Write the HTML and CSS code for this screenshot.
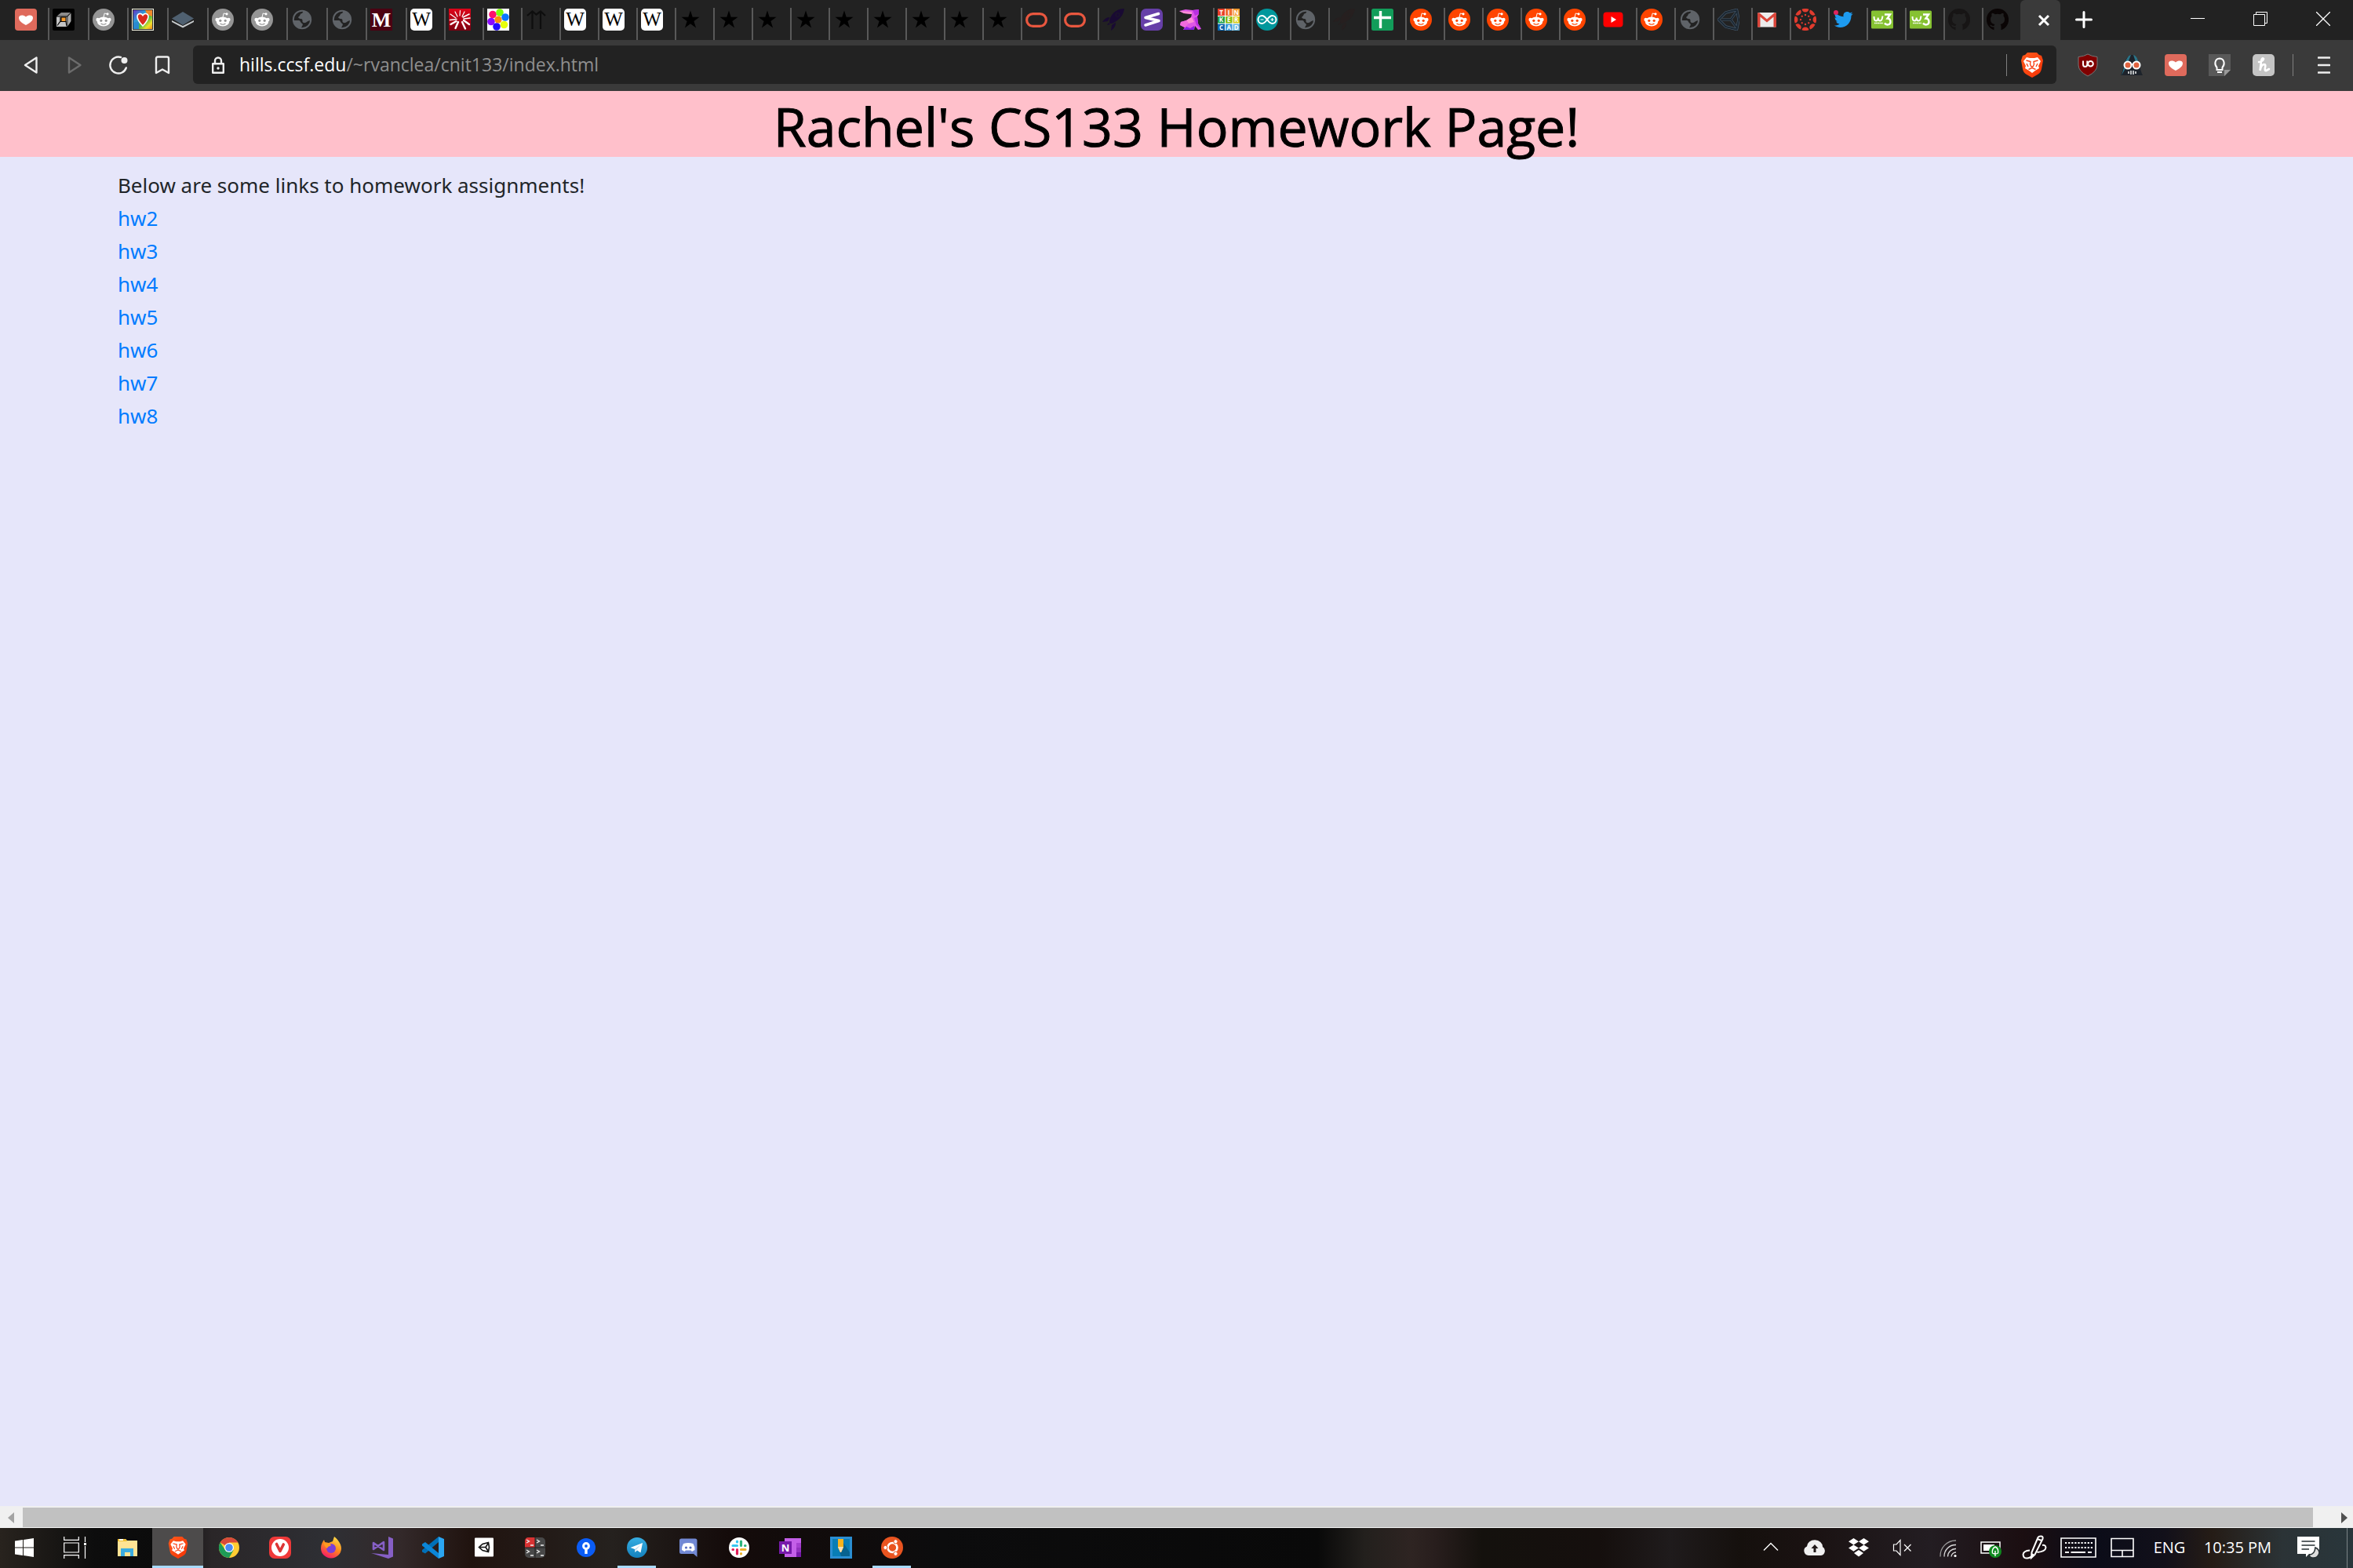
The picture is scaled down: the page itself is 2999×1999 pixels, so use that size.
FILE: index.html
```html
<!DOCTYPE html>
<html lang="en">
<head>
<meta charset="utf-8">
<title>Rachel's CS133 Homework Page!</title>
<link rel="stylesheet" href="styles.css">
</head>
<body>
<svg class="sprite" aria-hidden="true">
  <defs>
    <linearGradient id="g-red" x1="0" y1="0" x2="0" y2="1"><stop offset="0" stop-color="#e0051a"/><stop offset="1" stop-color="#7c0010"/></linearGradient>
    <linearGradient id="g-rainbow" x1="0" y1="0" x2="1" y2="1"><stop offset="0" stop-color="#6a2fc0"/><stop offset=".35" stop-color="#2f9ad8"/><stop offset=".6" stop-color="#4dbb3c"/><stop offset=".8" stop-color="#f0e02a"/><stop offset="1" stop-color="#f07f1c"/></linearGradient>
    <linearGradient id="g-fox" x1=".8" y1="0" x2=".3" y2="1"><stop offset="0" stop-color="#ffe14a"/><stop offset=".5" stop-color="#ff8a1c"/><stop offset="1" stop-color="#f5156c"/></linearGradient>
    <linearGradient id="g-tele" x1="0" y1="0" x2="0" y2="1"><stop offset="0" stop-color="#37aee2"/><stop offset="1" stop-color="#1481bd"/></linearGradient>
    <linearGradient id="g-brave" x1="0" y1="0" x2="1" y2="1"><stop offset="0" stop-color="#ff5a1c"/><stop offset="1" stop-color="#f53205"/></linearGradient>
  </defs>
  <symbol id="heart" viewBox="0 0 28 28"><rect width="28" height="28" rx="4" fill="#df6a5c"/><path d="M14 21C9 18.500 5 15.500 5 11.800C5 8 10.500 7.500 14 10.500C17.500 7.500 23 8 23 11.800C23 15.500 19 18.500 14 21Z" fill="#fff"/></symbol>
  <symbol id="cube" viewBox="0 0 28 28"><rect width="28" height="28" rx="2" fill="#000"/><path d="M5.500 9.500L11 5H23L18.500 9.500Z" fill="#8c8c8c"/><path d="M19.300 10L23.500 5.800V16L19.300 22.500Z" fill="#aaa"/><path d="M5 10.500H18.500V23H5Z" fill="#c4c4c4"/><path d="M10 11V16L6 21.500M10 16.500H17L18 22.500" fill="none" stroke="#000" stroke-width="1.200"/><rect x="11" y="11" width="6" height="5.500" fill="#f79a2b" stroke="#000"/></symbol>
  <symbol id="reddit" viewBox="0 0 28 28"><circle cx="14" cy="14" r="14" fill="currentColor"/><g fill="#fff"><ellipse cx="14" cy="16.500" rx="8.200" ry="6"/><circle cx="6.600" cy="14" r="2.200"/><circle cx="21.400" cy="14" r="2.200"/><circle cx="19" cy="6.800" r="1.600"/></g><path d="M14 11L15.200 6L19 6.800" fill="none" stroke="#fff" stroke-width="1"/><circle cx="10.800" cy="15.300" r="1.600" fill="currentColor"/><circle cx="17.200" cy="15.300" r="1.600" fill="currentColor"/><path d="M10.500 19Q14 21.400 17.500 19" fill="none" stroke="currentColor" stroke-width="1.100"/></symbol>
  <symbol id="rainbow" viewBox="0 0 28 28"><rect width="28" height="28" fill="#f1f1df"/><rect x="1.500" y="1.500" width="25" height="25" fill="url(#g-rainbow)" stroke="#333"/><path d="M17 2H26V10L20 8Z" fill="#f08a2a"/><path d="M2 18L9 16L9 26H2Z" fill="#2a8ad0"/><path d="M14 22C9 17 7 14 7 10C7 6 12 5 14 8.500C16 5 21 6 21 10C21 14 19 17 14 22Z" fill="#d92a1e" stroke="#fff" stroke-width="1.600"/></symbol>
  <symbol id="layers" viewBox="0 0 28 28"><path d="M0 15L14 22L28 15V17L14 24.500L0 17Z" fill="#c8ccce"/><path d="M14 4L28 12.500L14 21L0 12.500Z" fill="#4f6070"/></symbol>
  <symbol id="globe" viewBox="0 0 28 28"><circle cx="14" cy="14" r="11.200" fill="none" stroke="#5f6368" stroke-width="2"/><path d="M16 3L14 6C11 6 12 9 10 10C8 11 10 13 13 13C16 14 13 17 16 18C19 19 21 15 25 15C25.500 9 22 4 16 3Z" fill="#5f6368"/><path d="M3 15H10C12 15 12 18 14 19C16 20 14 22 13 24.500C7 25 3 20 3 15Z" fill="#5f6368"/></symbol>
  <symbol id="burst" viewBox="0 0 28 28"><rect width="28" height="28" fill="url(#g-red)"/><g stroke="#fff" stroke-linecap="round"><path d="M11 10L8 4M14 9L14.500 2.500M17 10L20 4M9 12L2 7" stroke-width="1.200"/><path d="M18 11L26 7M19 13L27 12M10 13.500L1.500 14.500" stroke-width="1.600"/><path d="M9.500 16L2.500 20M12 17L8.500 25M17 17L21 25.500M19 15L26 20" stroke-width="2.400"/></g></symbol>
  <symbol id="flower" viewBox="0 0 28 28"><rect width="28" height="28" fill="#fff"/><circle cx="7" cy="7.500" r="4.800" fill="#ff0f6b"/><circle cx="16" cy="5" r="4.800" fill="#7aff0a"/><circle cx="23" cy="11" r="4.800" fill="#0a78ff"/><circle cx="5" cy="16.500" r="4.800" fill="#8a0aff"/><circle cx="14" cy="14" r="4.600" fill="#ff8a0a"/><circle cx="21.500" cy="20.500" r="4.800" fill="#e8ff0a"/><circle cx="12" cy="23" r="4.800" fill="#230aff"/></symbol>
  <symbol id="arrows" viewBox="0 0 28 28"><path d="M8.500 26V4M19 26V4M2 9L8.500 3.500L13.500 7.500L19 3.500L25 9" fill="none" stroke="#0e0e0e" stroke-width="2.200"/></symbol>
  <symbol id="star" viewBox="0 0 28 28"><path d="M14 2.500L16.700 10.800H25.500L18.400 16L21.100 24.400L14 19.200L6.900 24.400L9.600 16L2.500 10.800H11.300Z" fill="#000"/></symbol>
  <symbol id="oval" viewBox="0 0 28 28"><rect x="1.600" y="6.600" width="24.800" height="15.800" rx="7.900" fill="none" stroke="#e9573f" stroke-width="3.200"/></symbol>
  <symbol id="rocket" viewBox="0 0 28 28"><path d="M28 0C21 0 15 3 11 10C9 13 9 16 9 18C10 19 11 19 12 19C18 17 27 10 28 0ZM9.500 11C5 11 2 14 0 17L7 16ZM17 17.500C17 23 14 26 11 28L12 21ZM8 18L6 21L10 20Z" fill="currentColor"/><circle cx="19.500" cy="8" r="2.500" fill="none" stroke="#222" stroke-width=".6"/></symbol>
  <symbol id="semaphore" viewBox="0 0 28 28"><rect width="28" height="28" rx="6.500" fill="#663fa8"/><path d="M22.500 6.500L6 11.500L23 15.500L6 21" fill="none" stroke="#fff" stroke-width="3.600" stroke-linecap="round" stroke-linejoin="round"/></symbol>
  <symbol id="rabbit" viewBox="0 0 28 28"><path d="M0 3L8 1L17 2L25 1V7L23 10L24 19L28 26L24 27L20 22L19 27H5L7 24L1 21L2 17L9 15L15 11L16 7L6 6Z" fill="#e056e6"/><path d="M0 3L16 4L16 7L6 6ZM9 15L16 11L19 17L12 19Z" fill="#ff8fd6"/><path d="M17 2L25 1V7L20 9ZM19 12L23 10L24 19L28 26L22 21Z" fill="#b92fe0"/><path d="M5 27L9 23L14 25L19 22L19 27Z" fill="#8a1fe0"/><path d="M2 17L9 15L12 19L7 24L1 21Z" fill="#f26bdc"/></symbol>
  <symbol id="arduino" viewBox="0 0 28 28"><circle cx="14" cy="14" r="14" fill="#00979c"/><path d="M14 14C11.500 10.500 10 9 7.500 9A5 5 0 0 0 7.500 19C10 19 11.500 17.500 14 14C16.500 10.500 18 9 20.500 9A5 5 0 0 1 20.500 19C18 19 16.500 17.500 14 14Z" fill="none" stroke="#fff" stroke-width="2"/><path d="M5.500 14H9.500M18.500 14H22.500M20.500 12V16" stroke="#fff" stroke-width="1.200"/></symbol>
  <symbol id="sheets" viewBox="0 0 28 28"><rect width="28" height="28" rx="2.500" fill="#129d5a"/><path d="M11.500 3V25M3 11.500H25" stroke="#fff" stroke-width="3.400"/></symbol>
  <symbol id="youtube" viewBox="0 0 28 28"><rect x="1.500" y="4.500" width="25" height="19" rx="4" fill="#f00"/><path d="M11.500 10L18 14L11.500 18Z" fill="#fff"/></symbol>
  <symbol id="unity" viewBox="0 0 28 28"><path d="M1 14L10 5.500L25 1.500L27 14L25 26.500L10 22.500Z" fill="none" stroke="currentColor" stroke-width="2.600"/><path d="M5 14H18M18 14L25 3M18 14L25 25" fill="none" stroke="currentColor" stroke-width="2.600"/></symbol>
  <symbol id="gmail" viewBox="0 0 28 28"><rect x="2" y="5" width="24" height="18.500" rx="1.500" fill="#ececec"/><path d="M2 6.500Q2 5 4 5L14 13.500L24 5Q26 5 26 6.500V23.500H22.500V10.500L14 17.500L5.500 10.500V23.500H2Z" fill="#d9453a"/></symbol>
  <symbol id="canvas" viewBox="0 0 28 28"><g fill="#e13b2e"><g id="cv"><path d="M9.500 0.800Q14 -1 18.500 0.800A4.600 4.600 0 0 1 9.500 .8Z"/><circle cx="14" cy="8" r="1.200"/></g><use href="#cv" transform="rotate(45 14 14)"/><use href="#cv" transform="rotate(90 14 14)"/><use href="#cv" transform="rotate(135 14 14)"/><use href="#cv" transform="rotate(180 14 14)"/><use href="#cv" transform="rotate(225 14 14)"/><use href="#cv" transform="rotate(270 14 14)"/><use href="#cv" transform="rotate(315 14 14)"/></g></symbol>
  <symbol id="twitter" viewBox="0 0 28 28"><path d="M2 21.500C5 21.500 7 21 8.500 19.500C6 19.300 4.800 18 4.200 16.300H6.200C3.800 15.500 2.600 13.800 2.600 11.300L4.700 12C2.600 10 2 7.500 3.400 5.200C6 8.200 9.300 10 13.600 10.200C12.800 6 15.500 4 18.400 4C20 4 21 4.600 22 5.500L25 4.400L23 7.200L25.800 6.500L23.500 9C23.500 18 17 24 9.500 24C6.500 24 4 23 2 21.500Z" fill="#1d9bf0"/><circle cx="4" cy="5" r="3" fill="#e0245e"/></symbol>
  <symbol id="w3" viewBox="0 0 28 28"><rect y="2.500" width="28" height="23" rx="1.500" fill="#86c232"/><path d="M3.500 10C3.500 14.500 4.500 15.500 6 15.500C8 15.500 8.700 14 8.700 11.500C8.700 14 9.500 15.500 11.500 15.500C13.800 15.500 14 12.500 14.500 9.500" fill="none" stroke="#fff" stroke-width="2"/><path d="M17 7.500H24L20.500 12.500C24 12.500 24.500 15 24.500 17C24.500 21 19 21.500 17 18.500" fill="none" stroke="#fff" stroke-width="2.400"/><path d="M4 18.500H15" stroke="#fff" stroke-width="1.600" stroke-dasharray="1.200 .4"/></symbol>
  <symbol id="github" viewBox="0 0 28 28"><path d="M14 0A14 14 0 0 0 9.500 27.300V23.500C6 24 5 22.500 4 20.500C7 21 7 22.500 9.500 22C9.600 21 10 20.400 10.500 20C6.500 19.300 5 17 5 13.500C5 11.800 5.500 10.500 6.500 9.500C6.200 8 6.200 7 6.800 5.700C8.500 5.700 9.500 6.500 10.700 7.200Q14 6.500 17.300 7.200C18.500 6.500 19.500 5.700 21.200 5.700C21.800 7 21.800 8 21.500 9.500C22.500 10.500 23 11.800 23 13.500C23 17 21.500 19.300 17.500 20C18.300 20.800 18.500 21.500 18.500 23V27.300A14 14 0 0 0 14 0Z" fill="currentColor"/></symbol>
  <symbol id="brave" viewBox="0 0 28 32"><path d="M8 0H20L23 3L26 4L28 10L26 21Q25 26 21 28L14 32L7 28Q3 26 2 21L0 10L2 4L5 3Z" fill="url(#g-brave)"/><path d="M7 6L11 7H17L21 6L25 11L22 17L23 20L18 23L14 26L10 23L5 20L6 17L3 11Z" fill="#fff"/><path d="M6.500 10L12 11.500L11.500 15L13 18H15L16.500 15L16 11.500L21.500 10M14 18V20M9.500 21.500L14 19.500L18.500 21.500M7 14L9 18M21 14L19 18" fill="none" stroke="#f9431a" stroke-width="1.400"/></symbol>
  <symbol id="ublock" viewBox="0 0 26 30"><path d="M13 1Q18 4 25 4.500V15Q25 23 13 29Q1 23 1 15V4.500Q8 4 13 1Z" fill="#800000" stroke="#777"/><path d="M7 9.500V14Q7 17 9.500 17Q12.300 17 12.300 14V9.500" fill="none" stroke="#fff" stroke-width="2"/><circle cx="16.500" cy="13.300" r="3.300" fill="none" stroke="#fff" stroke-width="2"/></symbol>
  <symbol id="vader" viewBox="0 0 28 28"><path d="M0 27C4 20 3 12 7 6Q14 -4 21 6C25 12 24 20 28 27Z" fill="#1d232b"/><path d="M7 7Q10 1 13 1L9 11L5 20L1 27C4 20 4 12 7 7ZM16 1Q20 2 22 8L24 14L19 10Z" fill="#2b7488"/><circle cx="9" cy="14" r="4.500" fill="#e0633f" stroke="#fff" stroke-width="2"/><circle cx="20" cy="14" r="4.500" fill="#e0633f" stroke="#fff" stroke-width="2"/><path d="M13 13H16M10 22V25M13 21V26M16 21V26M19 22V25" stroke="#fff" stroke-width="1.400"/></symbol>
  <symbol id="bulb" viewBox="0 0 28 28"><path d="M0 0H28V20L20 28H0Z" fill="#595959"/><path d="M28 20H20V28Z" fill="#999"/><path d="M10.500 17C7 13.500 7.500 6 14 5.500C20.500 6 21 13.500 17.500 17V20H10.500ZM11 23H17" fill="none" stroke="#fff" stroke-width="2"/></symbol>
  <symbol id="honey" viewBox="0 0 28 28"><rect width="28" height="28" rx="5" fill="#c4c4c4"/><path d="M8 10Q14 9 14 6Q12 4 11 9L9.500 21Q11 13 15 13Q17 13 16 17Q15 22 17.500 21L21 19" fill="none" stroke="#fff" stroke-width="2.600" stroke-linecap="round"/></symbol>
  <symbol id="cloud" viewBox="0 0 28 28"><path d="M6 24A6 6 0 0 1 4 12.500A10 8.500 0 0 1 24 13A6 6 0 0 1 22 24Z" fill="#f0f0f0"/><path d="M14 10L9.500 15H12.500V20H15.500V15H18.500Z" fill="#211a1a"/></symbol>
</svg>

<div class="window">
  <header class="chrome">
    <nav class="tabs" aria-label="Tabs">
      <div class="tab tab-first"><svg><use href="#heart"/></svg></div>
      <div class="tab-group">
        <div class="tab"><svg><use href="#cube"/></svg></div>
        <div class="tab grey"><svg><use href="#reddit"/></svg></div>
        <div class="tab"><svg><use href="#rainbow"/></svg></div>
        <div class="tab"><svg><use href="#layers"/></svg></div>
        <div class="tab grey"><svg><use href="#reddit"/></svg></div>
        <div class="tab grey"><svg><use href="#reddit"/></svg></div>
        <div class="tab"><svg><use href="#globe"/></svg></div>
        <div class="tab"><svg><use href="#globe"/></svg></div>
        <div class="tab"><svg viewBox="0 0 28 28"><rect width="28" height="28" fill="#4c0012"/><text x="14" y="23" text-anchor="middle" class="glyph glyph-m">M</text></svg></div>
      </div>
      <div class="tab"><svg viewBox="0 0 28 28"><rect width="28" height="28" rx="5" fill="#fff"/><text x="14" y="22" text-anchor="middle" class="glyph glyph-w">W</text></svg></div>
      <div class="tab"><svg><use href="#burst"/></svg></div>
      <div class="tab"><svg><use href="#flower"/></svg></div>
      <div class="tab"><svg><use href="#arrows"/></svg></div>
      <div class="tab"><svg viewBox="0 0 28 28"><rect width="28" height="28" rx="5" fill="#fff"/><text x="14" y="22" text-anchor="middle" class="glyph glyph-w">W</text></svg></div>
      <div class="tab"><svg viewBox="0 0 28 28"><rect width="28" height="28" rx="5" fill="#fff"/><text x="14" y="22" text-anchor="middle" class="glyph glyph-w">W</text></svg></div>
      <div class="tab"><svg viewBox="0 0 28 28"><rect width="28" height="28" rx="5" fill="#fff"/><text x="14" y="22" text-anchor="middle" class="glyph glyph-w">W</text></svg></div>
      <div class="tab"><svg><use href="#star"/></svg></div>
      <div class="tab"><svg><use href="#star"/></svg></div>
      <div class="tab"><svg><use href="#star"/></svg></div>
      <div class="tab"><svg><use href="#star"/></svg></div>
      <div class="tab"><svg><use href="#star"/></svg></div>
      <div class="tab"><svg><use href="#star"/></svg></div>
      <div class="tab"><svg><use href="#star"/></svg></div>
      <div class="tab"><svg><use href="#star"/></svg></div>
      <div class="tab"><svg><use href="#star"/></svg></div>
      <div class="tab"><svg><use href="#oval"/></svg></div>
      <div class="tab"><svg><use href="#oval"/></svg></div>
      <div class="tab indigo"><svg><use href="#rocket"/></svg></div>
      <div class="tab"><svg><use href="#semaphore"/></svg></div>
      <div class="tab"><svg><use href="#rabbit"/></svg></div>
      <div class="tab"><svg viewBox="0 0 28 28"><rect width="28" height="28" fill="#fff"/><path d="M0 0H9V9H0Z" fill="#e8402a"/><path d="M10 0H18.500V9H10Z" fill="#f07030"/><path d="M19.500 0H28V9H19.500Z" fill="#f59a30"/><path d="M0 10H9V18.500H0Z" fill="#1aa04a"/><path d="M10 10H18.500V18.500H10Z" fill="#86bc10"/><path d="M19.500 10H28V18.500H19.500Z" fill="#d8cc1a"/><path d="M0 19.500H9V28H0Z" fill="#0a66b0"/><path d="M10 19.500H18.500V28H10Z" fill="#3a9ad8"/><path d="M19.500 19.500H28V28H19.500Z" fill="#68b8e0"/><g class="glyph glyph-tiny" text-anchor="middle"><text x="4.500" y="7.500">T</text><text x="14.200" y="7.500">I</text><text x="23.700" y="7.500">N</text><text x="4.500" y="17">K</text><text x="14.200" y="17">E</text><text x="23.700" y="17">R</text><text x="4.500" y="26.500">C</text><text x="14.200" y="26.500">A</text><text x="23.700" y="26.500">D</text></g></svg></div>
      <div class="tab"><svg><use href="#arduino"/></svg></div>
      <div class="tab"><svg><use href="#globe"/></svg></div>
      <div class="tab shadow"><svg><use href="#rocket"/></svg></div>
      <div class="tab"><svg><use href="#sheets"/></svg></div>
      <div class="tab orange"><svg><use href="#reddit"/></svg></div>
      <div class="tab orange"><svg><use href="#reddit"/></svg></div>
      <div class="tab orange"><svg><use href="#reddit"/></svg></div>
      <div class="tab orange"><svg><use href="#reddit"/></svg></div>
      <div class="tab orange"><svg><use href="#reddit"/></svg></div>
      <div class="tab"><svg><use href="#youtube"/></svg></div>
      <div class="tab orange"><svg><use href="#reddit"/></svg></div>
      <div class="tab"><svg><use href="#globe"/></svg></div>
      <div class="tab"><svg viewBox="0 0 28 28"><path d="M1.500 14L10.500 5L24.500 1.500L27 14L24.500 26.500L10.500 23Z" fill="none" stroke="#46586a" stroke-width="3.400"/><path d="M6 14H17L25 3M17 14L25 25" fill="none" stroke="#46586a" stroke-width="3"/><path d="M1.500 14L10.500 5L24.500 1.500L27 14L24.500 26.500L10.500 23ZM6 14H17L25 3M17 14L25 25" fill="none" stroke="#1c2833" stroke-width="2"/></svg></div>
      <div class="tab"><svg><use href="#gmail"/></svg></div>
      <div class="tab"><svg><use href="#canvas"/></svg></div>
      <div class="tab"><svg><use href="#twitter"/></svg></div>
      <div class="tab"><svg><use href="#w3"/></svg></div>
      <div class="tab"><svg><use href="#w3"/></svg></div>
      <div class="tab dim"><svg><use href="#github"/></svg></div>
      <div class="tab black"><svg><use href="#github"/></svg></div>
      <div class="tab-active"><button class="icon-button" aria-label="Close tab"><svg width="16" height="16" viewBox="0 0 16 16"><path d="M2 2L14 14M14 2L2 14" stroke="#fff" stroke-width="3"/></svg></button></div>
      <button class="icon-button new-tab" aria-label="New tab"><svg width="22" height="22" viewBox="0 0 22 22"><path d="M11 1.500V20.500M1.500 11H20.500" stroke="#fff" stroke-width="3" stroke-linecap="round"/></svg></button>
      <div class="window-controls">
        <button class="icon-button" aria-label="Minimize"><svg width="18" height="18" viewBox="0 0 18 18"><path d="M0 8.500H18" stroke="#fff"/></svg></button>
        <button class="icon-button" aria-label="Restore"><svg width="18" height="18" viewBox="0 0 18 18"><path d="M.5 3.500H14.500V17.500H.5ZM3.500 3.500V.5H17.500V14.500H14.500" fill="none" stroke="#fff"/></svg></button>
        <button class="icon-button" aria-label="Close"><svg width="18" height="18" viewBox="0 0 18 18"><path d="M0 0L18 18M18 0L0 18" stroke="#fff" stroke-width="1.300"/></svg></button>
      </div>
    </nav>
    <div class="toolbar">
      <div class="nav-buttons">
        <button class="icon-button" aria-label="Back"><svg width="20" height="24" viewBox="0 0 20 24"><path d="M17.500 2.500V21.500L3 12Z" fill="none" stroke="currentColor" stroke-width="2.400" stroke-linejoin="round"/></svg></button>
        <button class="icon-button forward" aria-label="Forward" disabled><svg width="20" height="24" viewBox="0 0 20 24"><path d="M3 2.500V21.500L17.500 12Z" fill="none" stroke="currentColor" stroke-width="2.400" stroke-linejoin="round"/></svg></button>
        <button class="icon-button" aria-label="Reload"><svg width="26" height="26" viewBox="0 0 26 26"><path d="M16 3A10.500 10.500 0 1 0 22.800 16.500" fill="none" stroke="currentColor" stroke-width="2.400" stroke-linecap="round"/><circle cx="20.500" cy="7" r="4" fill="currentColor"/></svg></button>
        <button class="icon-button" aria-label="Bookmark"><svg width="20" height="24" viewBox="0 0 20 24"><path d="M2 3.500Q2 1.500 4 1.500H16Q18 1.500 18 3.500V22L10 17.500L2 22Z" fill="none" stroke="currentColor" stroke-width="2.400" stroke-linejoin="round"/></svg></button>
      </div>
      <div class="address">
        <svg width="18" height="22" viewBox="0 0 18 22"><path d="M2.200 9.200H15.800V20.800H2.200ZM5 9V5.500A4 4 0 0 1 13 5.500V9" fill="none" stroke="#eee" stroke-width="2.400" stroke-linejoin="round"/><circle cx="9" cy="15" r="1.700" fill="#eee"/></svg>
        <div class="url"><span class="host">hills.ccsf.edu</span>/~rvanclea/cnit133/index.html</div>
        <span class="divider"></span>
        <button class="icon-button shield" aria-label="Brave Shields"><svg width="28" height="32"><use href="#brave"/></svg></button>
      </div>
      <div class="extensions">
        <button class="icon-button" aria-label="uBlock Origin"><svg width="26" height="30"><use href="#ublock"/></svg></button>
        <button class="icon-button" aria-label="Privacy mask"><svg width="28" height="28"><use href="#vader"/></svg></button>
        <button class="icon-button" aria-label="Favorites"><svg width="28" height="28"><use href="#heart"/></svg></button>
        <button class="icon-button" aria-label="Keep"><svg width="28" height="28"><use href="#bulb"/></svg></button>
        <button class="icon-button" aria-label="Honey"><svg width="28" height="28"><use href="#honey"/></svg></button>
      </div>
      <span class="divider"></span>
      <button class="icon-button menu" aria-label="Menu"><svg width="16" height="22" viewBox="0 0 16 22"><path d="M1 1.500H15M1 11H15M1 20.500H15" stroke="#eee" stroke-width="2.600" stroke-linecap="round"/></svg></button>
    </div>
  </header>

  <main class="page">
    <h1>Rachel's CS133 Homework Page!</h1>
    <div class="content">
      <p>Below are some links to homework assignments!</p>
      <ul>
        <li><a href="#hw2">hw2</a></li>
        <li><a href="#hw3">hw3</a></li>
        <li><a href="#hw4">hw4</a></li>
        <li><a href="#hw5">hw5</a></li>
        <li><a href="#hw6">hw6</a></li>
        <li><a href="#hw7">hw7</a></li>
        <li><a href="#hw8">hw8</a></li>
      </ul>
    </div>
  </main>

  <div class="scrollbar">
    <svg width="8" height="14" viewBox="0 0 8 14"><path d="M8 0V14L0 7Z" fill="#a3a3a3"/></svg>
    <div class="thumb"></div>
    <svg width="8" height="14" viewBox="0 0 8 14"><path d="M0 0V14L8 7Z" fill="#505050"/></svg>
  </div>

  <footer class="taskbar">
    <button class="task start" aria-label="Start"><svg viewBox="0 0 28 28"><path d="M2 5.500L12 4V13.500H2ZM13 3.900L26 2V13.500H13ZM2 14.500H12V24L2 22.500ZM13 14.500H26V26L13 24.100Z" fill="#fff"/></svg></button>
    <button class="task view" aria-label="Task View"><svg width="30" height="28" viewBox="0 0 30 28"><path d="M.7 0V4.300H19.300V0M.7 28V23.700H19.300V28M.7 8H19.300V20H.7ZM27.500 0V7M27.500 12V28" fill="none" stroke="#fff" stroke-width="1.200"/><rect x="26" y="8" width="3" height="3" fill="#fff"/></svg></button>
    <button class="task" aria-label="File Explorer"><svg viewBox="0 0 28 28"><path d="M2 3H12L14 5H27V25H2Z" fill="#ffe394"/><path d="M2 3H12L14 6H2Z" fill="#f0c030"/><path d="M4 4H9" stroke="#fff" stroke-width="2"/><path d="M6 15H22V25H18V20H11V25H6Z" fill="#3bace0"/></svg></button>
    <button class="task current" aria-label="Brave"><svg><use href="#brave"/></svg></button>
    <button class="task" aria-label="Chrome"><svg viewBox="0 0 28 28"><circle cx="14" cy="14" r="13" fill="#fc3"/><path d="M14 14L2.700 7.500A13 13 0 0 1 25.300 7.500H14Z" fill="#d9493a"/><path d="M14 14L19.500 17.500L14 27A13 13 0 0 1 2.700 7.500L9 17Z" fill="#1e9c57"/><circle cx="14" cy="14" r="6" fill="#fff"/><circle cx="14" cy="14" r="4.800" fill="#4a8af4"/></svg></button>
    <button class="task" aria-label="Vivaldi"><svg viewBox="0 0 28 28"><rect width="28" height="28" rx="7" fill="#ef3939"/><circle cx="14" cy="14" r="11" fill="#fff"/><path d="M9.500 9.500L14 18.500L18.300 10" fill="none" stroke="#dc3535" stroke-width="3.600" stroke-linecap="round" stroke-linejoin="round"/></svg></button>
    <button class="task" aria-label="Firefox"><svg viewBox="0 0 28 28"><path d="M18 0C22 3 27 9 27 15A13 12.500 0 0 1 1 15C1 10 3 7 5 4L6 7L11 8L16 6Z" fill="url(#g-fox)"/><circle cx="14" cy="15" r="6" fill="#7b3fd8"/><path d="M5 8L12 9Q15 10 13 12Q10 12 9 15Q5 13 5 8Z" fill="#ff9b1f"/></svg></button>
    <button class="task" aria-label="Visual Studio"><svg viewBox="0 0 28 28"><path d="M22 0L28 2.500V25.500L22 28L0 21L22 23Z" fill="#865fc5"/><path d="M3 8L16 17V7L3 16Z" fill="none" stroke="#865fc5" stroke-width="2.600" stroke-linejoin="round"/></svg></button>
    <button class="task" aria-label="Visual Studio Code"><svg viewBox="0 0 28 28"><path d="M21 7L4 21.500L0 19.500V17L21 0Z" fill="#0070b8"/><path d="M0 9.500L4 7L21 21V28L0 11.500Z" fill="#0b86d8"/><path d="M21 0L28 3V25L21 28Z" fill="#2ba6f2"/></svg></button>
    <button class="task" aria-label="Unity"><svg viewBox="0 0 28 28"><rect x="2" y="1.500" width="24" height="24" rx="1" fill="#fff"/><path d="M7.500 13.500L12 9.500L19.500 7.500L20.500 13.500L19.500 19.500L12 17.500ZM9 13.500H16L19.500 8M16 13.500L19.500 19" fill="none" stroke="#111" stroke-width="1.600"/></svg></button>
    <button class="task" aria-label="Terminals"><svg viewBox="0 0 28 28"><rect x="1" y="1" width="26" height="26" rx="5" fill="#484848"/><path d="M1 14V6Q1 1 6 1H14V14Z" fill="#d93232"/><path d="M14 1V27M1 14H27" stroke="#222"/><path d="M3 4L6.500 6L3 8M16 4L19.500 6L16 8M3 17L6.500 19L3 21M16 17L19.500 19L16 21M8 11H12M21 11H25M8 24H12M21 24H25" fill="none" stroke="#eee" stroke-width="1.300"/></svg></button>
    <button class="task" aria-label="Sourcetree"><svg viewBox="0 0 28 28"><circle cx="14" cy="14" r="12" fill="#0a5cf5"/><circle cx="14" cy="12" r="3.400" fill="none" stroke="#fff" stroke-width="3"/><path d="M14 15V22" stroke="#fff" stroke-width="3.400"/></svg></button>
    <button class="task running" aria-label="Telegram"><svg viewBox="0 0 28 28"><circle cx="14" cy="14" r="13" fill="url(#g-tele)"/><path d="M5.500 14L21 8L18.500 20.500L14 17.500L11.500 20L11 16Z" fill="#fff"/><path d="M11 16L18.500 10.500L12.500 17L11.500 20Z" fill="#b8d8ea"/></svg></button>
    <button class="task" aria-label="Discord"><svg viewBox="0 0 28 28"><path d="M3 5Q3 2.500 5.500 2.500H23Q25.500 2.500 25.500 5V26L21 22H5.500Q3 22 3 19.500Z" fill="#7289d4"/><path d="M8 9Q14 7 20.500 9Q23 13 22.500 17L19 19L17.500 17.500H11L9.500 19L6 17Q5.500 13 8 9Z" fill="#fff"/><circle cx="11.500" cy="14" r="1.600" fill="#5a6fc0"/><circle cx="17" cy="14" r="1.600" fill="#5a6fc0"/></svg></button>
    <button class="task" aria-label="Slack"><svg viewBox="0 0 28 28"><circle cx="14" cy="14" r="13" fill="#fff"/><g fill="none" stroke-width="3.200" stroke-linecap="round"><path d="M6 11.500H11.500M11.500 6V7" stroke="#36c5f0"/><path d="M16.500 6V11.500M21.500 11.500H22" stroke="#2eb67d"/><path d="M16.500 16.500H22M16.500 21.500V22" stroke="#ecb22e"/><path d="M11.500 16.500V22M6 16.500H6.500" stroke="#e01e5a"/></g></svg></button>
    <button class="task" aria-label="OneNote"><svg viewBox="0 0 28 28"><path d="M7 2H28V26H7Z" fill="#c45fe8"/><path d="M22 8H28V14H22Z" fill="#a63fd0"/><path d="M22 14H28V20H22Z" fill="#9332bf"/><path d="M22 20H28V26H22Z" fill="#7719aa"/><rect y="6" width="16" height="16" fill="#7719aa"/><text x="8" y="19" text-anchor="middle" class="glyph glyph-n">N</text></svg></button>
    <button class="task" aria-label="Pencil"><svg viewBox="0 0 28 28"><rect width="28" height="28" fill="#2a8ed2"/><path d="M3 3H25V25H3Z" fill="#087db5"/><path d="M11 15L14 19L17 8L25 20V25H14Z" fill="#07628f"/><path d="M10 3H17V14L14 20H13L10 14Z" fill="#f9b31c"/><path d="M10 13L17 13L14 20H13Z" fill="#f4dfb8"/></svg></button>
    <button class="task running" aria-label="Ubuntu"><svg viewBox="0 0 28 28"><circle cx="14" cy="14" r="14" fill="#e95420"/><circle cx="14.500" cy="14" r="6" fill="none" stroke="#fff" stroke-width="2.600"/><g fill="#fff" stroke="#e95420"><circle cx="5.500" cy="14" r="2.600"/><circle cx="18.500" cy="6.300" r="2.600"/><circle cx="18.500" cy="21.700" r="2.600"/></g></svg></button>

    <div class="tray">
      <button class="tray-item" aria-label="Show hidden icons"><svg viewBox="0 0 28 28"><path d="M5 17.500L14 8.500L23 17.500" fill="none" stroke="#fff" stroke-width="1.400"/></svg></button>
      <button class="tray-item" aria-label="Backup"><svg><use href="#cloud"/></svg></button>
      <button class="tray-item" aria-label="Dropbox"><svg viewBox="0 0 28 28"><path d="M7.500 2L14 6.200L7.500 10.400L1 6.200ZM20.500 2L27 6.200L20.500 10.400L14 6.200ZM7.500 10.400L14 14.600L7.500 18.800L1 14.600ZM20.500 10.400L27 14.600L20.500 18.800L14 14.600ZM14 17L20 21L14 25.500L8 21Z" fill="#fff"/></svg></button>
      <button class="tray-item" aria-label="Volume muted"><svg viewBox="0 0 28 28"><path d="M2.500 10H6L11 4.500V23.500L6 18H2.500ZM16 10L24.500 18.500M24.500 10L16 18.500" fill="none" stroke="#fff" stroke-width="1.200"/></svg></button>
      <button class="tray-item" aria-label="Wi-Fi"><svg viewBox="0 0 28 28"><path d="M6 25.500A19.500 19.500 0 0 1 26 5" fill="none" stroke="#999" stroke-width="1.300"/><path d="M11 25.500A14.500 14.500 0 0 1 26 10.500M15.500 25.500A10 10 0 0 1 26 15.500M20 25.500A6 6 0 0 1 26 20" fill="none" stroke="#ddd" stroke-width="1.300"/><circle cx="25" cy="24.500" r="1.600" fill="#fff"/></svg></button>
      <button class="tray-item" aria-label="Battery saver"><svg viewBox="0 0 28 28"><path d="M2 7H26V21H2Z" fill="none" stroke="#fff" stroke-width="1.500"/><path d="M5 10H19V18H5Z" fill="#fff"/><circle cx="20" cy="19" r="8" fill="#0f8a1f"/><path d="M20 25V18M16.500 21Q15.500 15 20 13Q24.500 15 23.500 21Q20 23 16.500 21Z" fill="none" stroke="#fff" stroke-width="1.400"/></svg></button>
      <button class="tray-item" aria-label="Windows Ink"><svg class="large" viewBox="0 0 32 32"><path d="M23.500 1.500Q27.500 1 26.500 5L16.500 25L12 29L12.500 22L20.500 3Q21.500 1.500 23.500 1.500ZM10 19.500Q2 20 1.500 25Q2 30 7 29.500Q12 29 14.500 24M19.500 22Q30 21 30.500 16Q30 12 26 13M20 5L25 7" fill="none" stroke="#fff" stroke-width="2"/></svg></button>
      <button class="tray-item" aria-label="Touch keyboard"><svg class="wide" viewBox="0 0 46 28"><path d="M1 2H45V26H1Z" fill="none" stroke="#fff" stroke-width="1.600"/><path d="M6 8H41M6 14H41" stroke="#fff" stroke-width="2.200" stroke-dasharray="2.200 1.900"/><path d="M6 20H11M13.500 20H32M35 20H40" stroke="#fff" stroke-width="2"/></svg></button>
      <button class="tray-item" aria-label="Touchpad"><svg class="large" viewBox="0 0 32 32"><path d="M2 4.500H30V27.500H2ZM2 19.500H30M16 19.500V27.500" fill="none" stroke="#fff" stroke-width="1.600"/></svg></button>
      <button class="tray-item language">ENG</button>
      <button class="tray-item clock">10:35 PM</button>
      <button class="tray-item actions" aria-label="Notifications"><svg class="large" viewBox="0 0 32 32"><path d="M2 2H30V24H17L13 28V24H2Z" fill="#fff"/><path d="M7.500 8H24.500M7.500 13H24.500M7.500 18H17" stroke="#273033" stroke-width="1.400"/><path d="M25 16Q30 18 30 23Q28 30 21 29Q17 28 17.500 25Q24 25 25 16Z" fill="#ddd" stroke="#273033" stroke-width="1.600"/></svg></button>
      <button class="show-desktop" aria-label="Show desktop"></button>
    </div>
  </footer>
</div>
</body>
</html>
```
FILE: styles.css
```css
* { box-sizing: border-box; }

body {
  margin: 0;
  font-family: "Open Sans", "Noto Sans", sans-serif;
  font-size: 26px;
  line-height: 42px;
  color: #212529;
}

button {
  margin: 0;
  padding: 0;
  border: 0;
  background: none;
  color: inherit;
  font: inherit;
}

svg { display: block; flex: none; }

.sprite { position: absolute; width: 0; height: 0; }

.window {
  display: flex;
  flex-direction: column;
  min-height: 100vh;
}

/* Tab strip */
.chrome { background: #3a3a3a; color: #eee; }

.tabs {
  display: flex;
  height: 51px;
  background: #222;
}

.tab {
  flex: none;
  width: 49px;
  height: 41px;
  margin-top: 10px;
  padding: 1px 0 0 4px;
  border-left: 2px solid #595959;
}

.tab svg { width: 28px; height: 28px; }

.tab-first { width: 61px; padding-left: 19px; border-left: 0; }

.tab-group { display: flex; width: 456px; }
.tab-group .tab { flex: 1; }

.grey { color: #959595; }
.orange { color: #ff4500; }
.indigo { color: #190a33; }
.shadow { color: #261f1f; }
.dim { color: #171515; }
.black { color: #0a0505; }

.icon-button {
  display: flex;
  align-items: center;
  justify-content: center;
  flex: none;
}

.tab-active {
  display: flex;
  align-items: center;
  justify-content: center;
  width: 51px;
  padding-left: 8px;
  border-radius: 6px 6px 0 0;
  background: #3a3a3a;
}

.new-tab { width: 60px; padding-bottom: 2px; }

.window-controls { display: flex; margin-left: auto; padding-bottom: 3px; }
.window-controls .icon-button { width: 80px; padding-left: 4px; }

/* Toolbar */
.toolbar {
  display: flex;
  align-items: center;
  height: 65px;
  padding-bottom: 2px;
}

.nav-buttons { display: flex; padding: 0 11px; }
.nav-buttons .icon-button { width: 56px; height: 48px; }
.forward { color: #6c6c6c; }

.address {
  display: flex;
  flex: 1;
  align-items: center;
  height: 49px;
  padding: 0 17px 0 23px;
  border-radius: 6px;
  background: #222;
}

.url {
  flex: 1;
  padding: 0 0 2px 18px;
  font-size: 23px;
  color: #8f8f8f;
}

.host { color: #fff; }

.divider { width: 1px; height: 28px; background: #808080; }

.shield { margin-left: 18px; }

.extensions { display: flex; padding: 0 9px 0 12px; }
.extensions .icon-button { width: 56px; }

.menu { width: 76px; padding-left: 2px; }

/* Web page */
.page { flex: 1; background: #e6e6fa; }

h1 {
  margin: 0 0 15px;
  padding-top: 6px;
  background: #ffc0cb;
  color: #000;
  font-size: 68px;
  font-weight: 500;
  line-height: 78px;
  text-align: center;
  -webkit-text-stroke: 1px #000;
}

.content { padding: 0 5%; font-family: "Noto Sans", sans-serif; }

p, ul { margin: 0; padding: 0; }
ul { list-style: none; }

a { color: #007bff; text-decoration: none; }

/* Horizontal scroll bar */
.scrollbar {
  display: flex;
  align-items: center;
  gap: 11px;
  height: 28px;
  padding: 2px 7px 1px 10px;
  background: #f0f0f0;
}

.thumb { flex: 1; height: 25px; margin-right: 25px; background: #c1c1c1; }

/* Taskbar */
.taskbar {
  display: flex;
  height: 51px;
  background: linear-gradient(90deg, #28231e 0, #0d0d0d 4%, #0b0b0b 7%, #2a2628 9%, #2e2f34 14%, #33292a 17%, #20130f 20%, #25211e 26%, #140b0a 31%, #0c0c0d 40%, #090909 56%, #23201d 58%, #2e2422 60%, #281e1d 61%, #14110d 63%, #150f0d 68%, #1f1b1c 71%, #15100d 74%, #1a1212 77%, #231d22 82%, #1b0e11 86%, #0b0c18 89%, #12101a 92%, #251c16 94%, #2b3336 97%, #29363b 100%);
}

.task {
  display: flex;
  align-items: center;
  justify-content: center;
  flex: none;
  width: 65px;
  padding-bottom: 1px;
}

.task svg { width: 28px; height: 28px; }
.start { width: 62px; }
.view { width: 67px; }
.view svg { width: 30px; }

.current { background: linear-gradient(#4d4b4b 48px, #a8daff 48px); }
.running { background: linear-gradient(#a8daff, #a8daff) center bottom / 49px 3px no-repeat; }

.tray {
  display: flex;
  margin-left: auto;
  color: #fff;
  font-size: 20px;
}

.tray-item {
  display: flex;
  align-items: center;
  justify-content: center;
  width: 56px;
  padding-bottom: 1px;
}

.tray-item svg { width: 28px; height: 28px; }
.tray-item .large { width: 32px; height: 32px; }
.tray-item .wide { width: 46px; }

.language { width: 64px; }
.clock { width: 110px; white-space: nowrap; }
.actions { width: 70px; }

.show-desktop { width: 8px; margin-left: 14px; border-left: 1px solid #7c8487; }

/* Lettering inside logos */
.glyph { fill: #fff; font-family: "Liberation Serif", serif; font-weight: 700; }
.glyph-m { font-size: 26px; }
.glyph-w { fill: #000; font-size: 25px; font-weight: 400; }
.glyph-n { font-family: "Open Sans", sans-serif; font-size: 13px; }
.glyph-tiny { font-family: "Open Sans", sans-serif; font-size: 8px; }
```
